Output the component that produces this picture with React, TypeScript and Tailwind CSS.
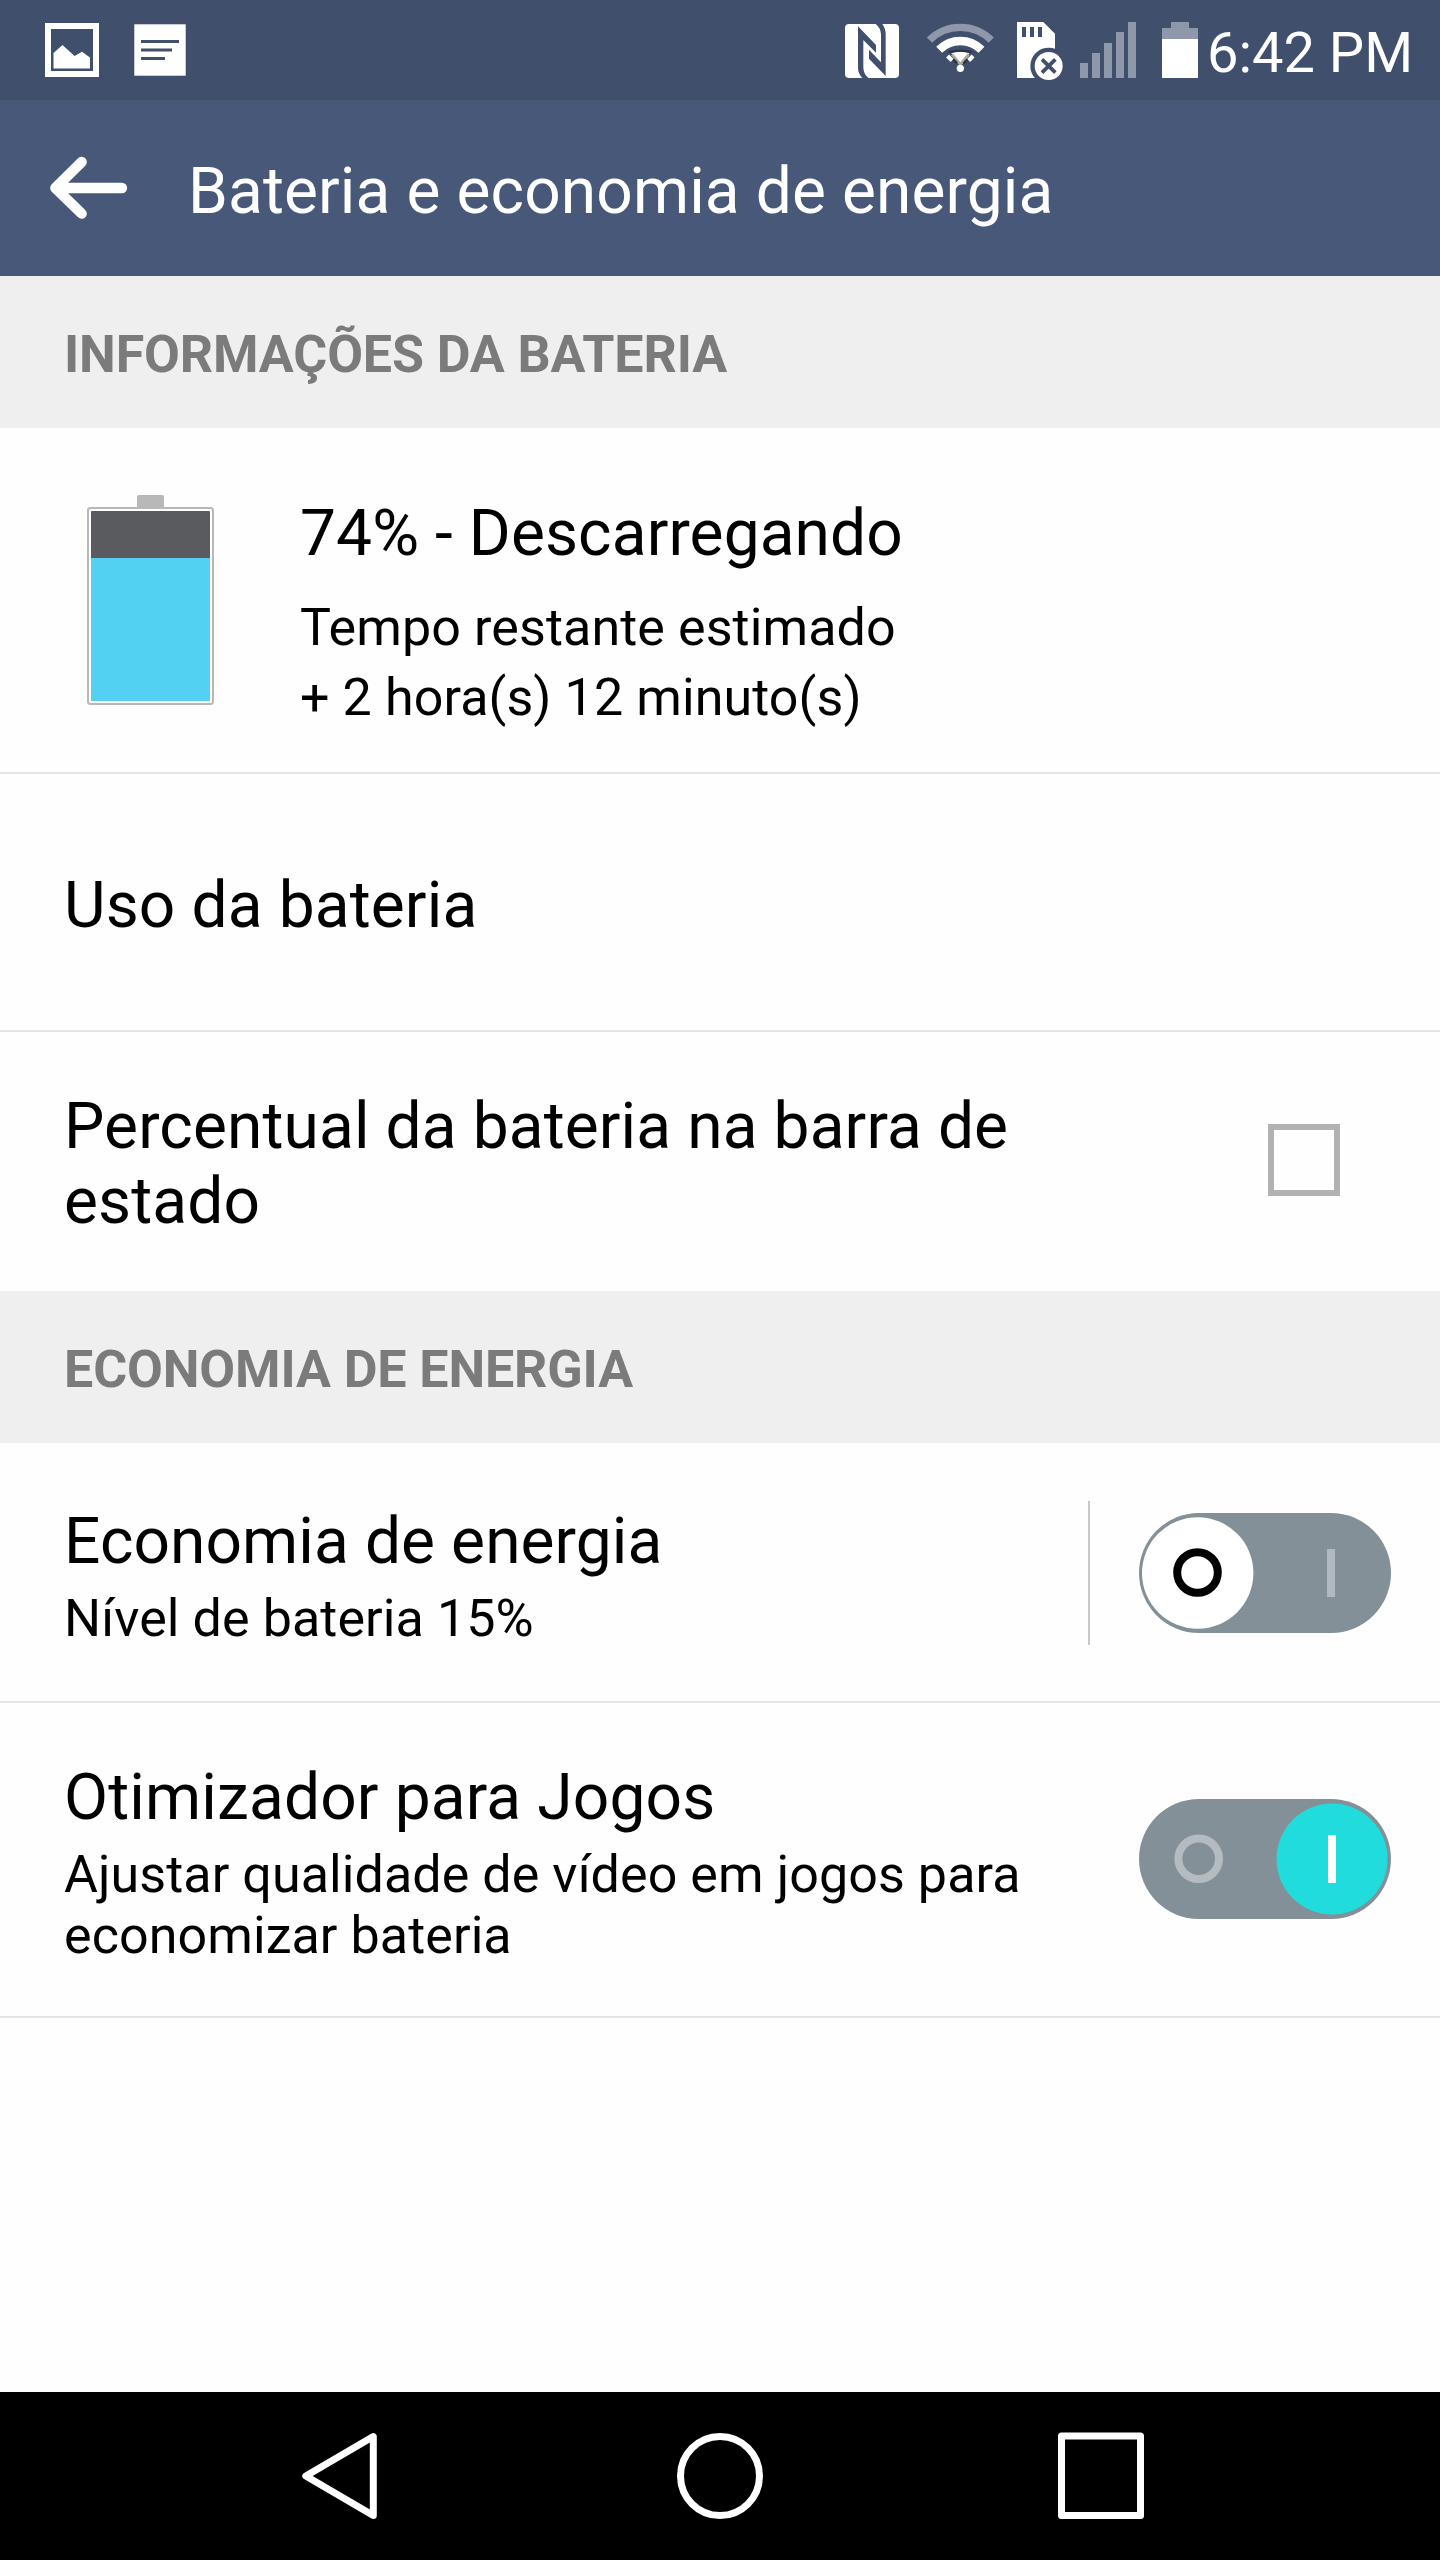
import React, { useState } from 'react';

// Status bar icons
function PictureIcon() {
  return (
    <svg className="w-[54px] h-[54px] mt-[23px]" viewBox="0 0 54 54">
      <rect x="3" y="3" width="48" height="48" fill="none" stroke="#fff" strokeWidth="6" />
      <path d="M8.5 45.5V30L17.5 22L29.5 33L37 28.8L45 34.5V45.5Z" fill="#fff" />
    </svg>
  );
}

function NoteIcon() {
  return (
    <svg className="w-[52px] h-[52px] mt-[24px] ml-[35px]" viewBox="0 0 52 52">
      <rect x="0.3" y="0.3" width="51.4" height="51.4" fill="#fff" />
      <path d="M7 17.5H45M7 26H38M7 34.5H31" stroke="#3f4f6c" strokeWidth="2.8" />
    </svg>
  );
}

function NfcIcon() {
  return (
    <svg className="w-[54px] h-[54px] mt-[24px]" viewBox="75 72 162 162">
      <rect x="75" y="72" width="162" height="162" rx="12" fill="#fff" />
      <path
        d="M114 79L168 135V158L130 120V203Q131 223 146 234H127Q114 220 114 203Z"
        fill="#3f4f6c"
      />
      <path
        d="M197 228L147 176V149L183 187V103Q182 84 167 72H187Q197 86 197 103Z"
        fill="#3f4f6c"
      />
    </svg>
  );
}

function WifiIcon() {
  return (
    <svg className="w-[69px] h-[56px] mt-[22px] ml-[27px]" viewBox="318 66 207 168">
      <path d="M328.4 120.4A131 131 0 0 1 513.6 120.4" fill="none" stroke="#8f98aa" strokeWidth="22" />
      <path d="M357.4 149.4A90 90 0 0 1 484.6 149.4" fill="none" stroke="#fff" strokeWidth="25" />
      <path d="M385 179L394 170M457 179L448 170" stroke="#fff" strokeWidth="19" />
      <path d="M394 160Q421 150 448 160L421 196Z" fill="#fff" />
      <path d="M386 156Q421 149 456 156" fill="none" stroke="#2c3242" strokeWidth="6" />
      <path d="M396 163L421 193L446 163" fill="none" stroke="#a9a9a4" strokeWidth="8" />
      <path d="M400 178L411 190M442 178L431 190" stroke="#2c3242" strokeWidth="7" />
      <circle cx="421" cy="205" r="11" fill="#fff" />
    </svg>
  );
}

function SdCardIcon() {
  return (
    <svg className="w-[46px] h-[59px] mt-[22px] ml-[22px]" viewBox="591 66 138 177">
      <path d="M591 66H670L705 101V234H591Z" fill="#fff" />
      <path d="M606 81h12v30h-12zM630 81h12v30h-12zM654 81h12v30h-12z" fill="#3f4f6c" />
      <circle cx="686" cy="198" r="55" fill="#3f4f6c" />
      <circle cx="686" cy="198" r="42" fill="#fff" />
      <path d="M666 178L706 218M706 178L666 218" stroke="#3f4f6c" strokeWidth="11" />
    </svg>
  );
}

function SignalIcon() {
  return (
    <svg className="w-[56px] h-[56px] mt-[22px] ml-[17px]" viewBox="0 0 56 56" fill="#8f98aa">
      <rect x="0" y="41" width="8" height="15" />
      <rect x="12" y="31" width="8" height="25" />
      <rect x="24" y="21" width="8" height="35" />
      <rect x="36" y="10" width="8" height="46" />
      <rect x="48" y="0" width="8" height="56" />
    </svg>
  );
}

function StatusBatteryIcon() {
  return (
    <svg className="w-[36px] h-[56px] mt-[22px] ml-[26px]" viewBox="0 0 36 56">
      <path d="M9 0H27V6H36V17H0V6H9Z" fill="#8f98aa" />
      <rect x="0" y="17" width="36" height="39" fill="#fff" />
    </svg>
  );
}

function SectionTitle({ children }: { children: React.ReactNode }) {
  return (
    <h2 className="h-[152px] pt-12 px-16 bg-[#efefef] text-[#7b7b7b] text-[52px] leading-[61px] font-bold tracking-[-0.12px]">
      {children}
    </h2>
  );
}

function Toggle({ on, onClick }: { on: boolean; onClick: () => void }) {
  return (
    <button type="button" role="switch" aria-checked={on} onClick={onClick} className="block w-[252px] h-[120px]">
      <svg className="w-[252px] h-[120px]" viewBox="0 0 252 120">
        <rect width="252" height="120" rx="60" fill="#849097" />
        {on ? (
          <>
            <circle cx="193" cy="60" r="55.5" fill="#20dcdc" />
            <circle cx="59.7" cy="59.7" r="20.3" fill="none" stroke="#b4bcc1" strokeWidth="8" />
            <rect x="189" y="36" width="8" height="48" fill="#fff" />
          </>
        ) : (
          <>
            <circle cx="58.7" cy="60" r="55.7" fill="#fff" />
            <circle cx="58.5" cy="59.5" r="20.3" fill="none" stroke="#000" strokeWidth="8" />
            <rect x="188" y="36" width="8" height="48" fill="#b0b9c1" />
          </>
        )}
      </svg>
    </button>
  );
}

export default function App() {
  const [showPercent, setShowPercent] = useState(false);
  const [saver, setSaver] = useState(false);
  const [optimizer, setOptimizer] = useState(true);

  return (
    <main className="w-[1440px] h-[2560px] flex flex-col bg-[#fefefe] text-black font-['Roboto',sans-serif] overflow-hidden">
      {/* Status bar */}
      <div className="h-[100px] shrink-0 pl-[45px] flex items-start bg-[#3f4f6c] text-white">
        <PictureIcon />
        <NoteIcon />
        <div className="ml-[659px] flex items-start">
          <NfcIcon />
          <WifiIcon />
          <SdCardIcon />
          <SignalIcon />
          <StatusBatteryIcon />
          <span className="mt-5 ml-[9px] text-[56px] leading-[66px] whitespace-nowrap">6:42 PM</span>
        </div>
      </div>

      {/* Title bar */}
      <header className="h-[176px] shrink-0 pl-[49px] flex items-start bg-[#475878] text-white">
        <svg className="w-[79px] h-[64px] mt-[56px]" viewBox="147 468 237 192" fill="none" stroke="#fff" strokeWidth="31" strokeLinecap="round" strokeLinejoin="round">
          <path d="M245 486L166 564L245 641M170 564H366" />
        </svg>
        <h1 className="mt-[54px] ml-[60px] text-[64px] leading-[75px] tracking-[0.12px] whitespace-nowrap">Bateria e economia de energia</h1>
      </header>

      <SectionTitle>INFORMAÇÕES DA BATERIA</SectionTitle>

      {/* Battery level */}
      <section className="h-[346px] pl-[87px] flex items-start border-b-2 border-[#e5e5e5]">
        <svg className="w-[127px] h-[210px] mt-[67px]" viewBox="0 0 127 210">
          <rect x="50" y="0" width="27" height="16" rx="2" fill="#b8b8b8" />
          <rect x="1" y="13" width="125" height="196" rx="2.5" fill="#fff" stroke="#b8b8b8" strokeWidth="2" />
          <rect x="4" y="16" width="119" height="60" rx="1" fill="#5a5b5f" />
          <rect x="4" y="63" width="119" height="143" fill="#52d1f2" />
        </svg>
        <div className="mt-[68px] ml-[86px] tracking-[0.1px]">
          <h3 className="text-[64px] leading-[75px]">74% - Descarregando</h3>
          <p className="mt-[22px] text-[52px] leading-[70px]">
            Tempo restante estimado<br />+ 2 hora(s) 12 minuto(s)
          </p>
        </div>
      </section>

      <section className="h-[258px] pt-[94px] px-16 border-b-2 border-[#e5e5e5]">
        <h3 className="text-[64px] leading-[75px] tracking-[0.14px]">Uso da bateria</h3>
      </section>

      <section className="h-[259px] pl-16 pr-[100px] flex items-start justify-between">
        <h3 className="w-[980px] mt-[57px] text-[64px] leading-[75px] tracking-[0.12px]">Percentual da bateria na barra de estado</h3>
        <button
          type="button"
          role="checkbox"
          aria-checked={showPercent}
          onClick={() => setShowPercent(!showPercent)}
          className="size-[72px] mt-[92px] border-6 border-[#b2b2b2]"
        />
      </section>

      <SectionTitle>ECONOMIA DE ENERGIA</SectionTitle>

      <section className="h-[260px] pl-16 pr-[49px] flex items-start border-b-2 border-[#e5e5e5]">
        <div className="flex-1 mt-[61px] tracking-[0.1px]">
          <h3 className="text-[64px] leading-[75px]">Economia de energia</h3>
          <p className="mt-[9px] text-[52px] leading-[61px]">Nível de bateria 15%</p>
        </div>
        <div className="w-0.5 h-36 mt-[58px] mr-[49px] bg-[#c4c9cd]" />
        <div className="mt-[70px]">
          <Toggle on={saver} onClick={() => setSaver(!saver)} />
        </div>
      </section>

      <section className="h-[315px] pl-16 pr-[49px] flex items-start justify-between border-b-2 border-[#e5e5e5]">
        <div className="w-[980px] mt-[57px]">
          <h3 className="text-[64px] leading-[75px] tracking-[0.16px]">Otimizador para Jogos</h3>
          <p className="mt-[9px] text-[52px] leading-[61px] tracking-[0.08px]">Ajustar qualidade de vídeo em jogos para economizar bateria</p>
        </div>
        <div className="mt-[96px]">
          <Toggle on={optimizer} onClick={() => setOptimizer(!optimizer)} />
        </div>
      </section>

      {/* Navigation bar */}
      <nav className="h-[168px] shrink-0 mt-auto pl-[301px] flex items-center bg-black">
        <svg className="w-[77px] h-[88px]" viewBox="0 0 77 88" fill="none" stroke="#fff" strokeWidth="7" strokeLinejoin="round">
          <path d="M72.3 4.6V83.4L4.8 44Z" />
        </svg>
        <svg className="w-[88px] h-[88px] ml-[298px]" viewBox="0 0 88 88" fill="none" stroke="#fff" strokeWidth="7">
          <circle cx="44" cy="44" r="39.5" />
        </svg>
        <svg className="w-[88px] h-[88px] ml-[293px]" viewBox="0 0 88 88" fill="none" stroke="#fff" strokeWidth="7" strokeLinejoin="round">
          <rect x="4.5" y="4" width="79" height="79.5" />
        </svg>
      </nav>
    </main>
  );
}
